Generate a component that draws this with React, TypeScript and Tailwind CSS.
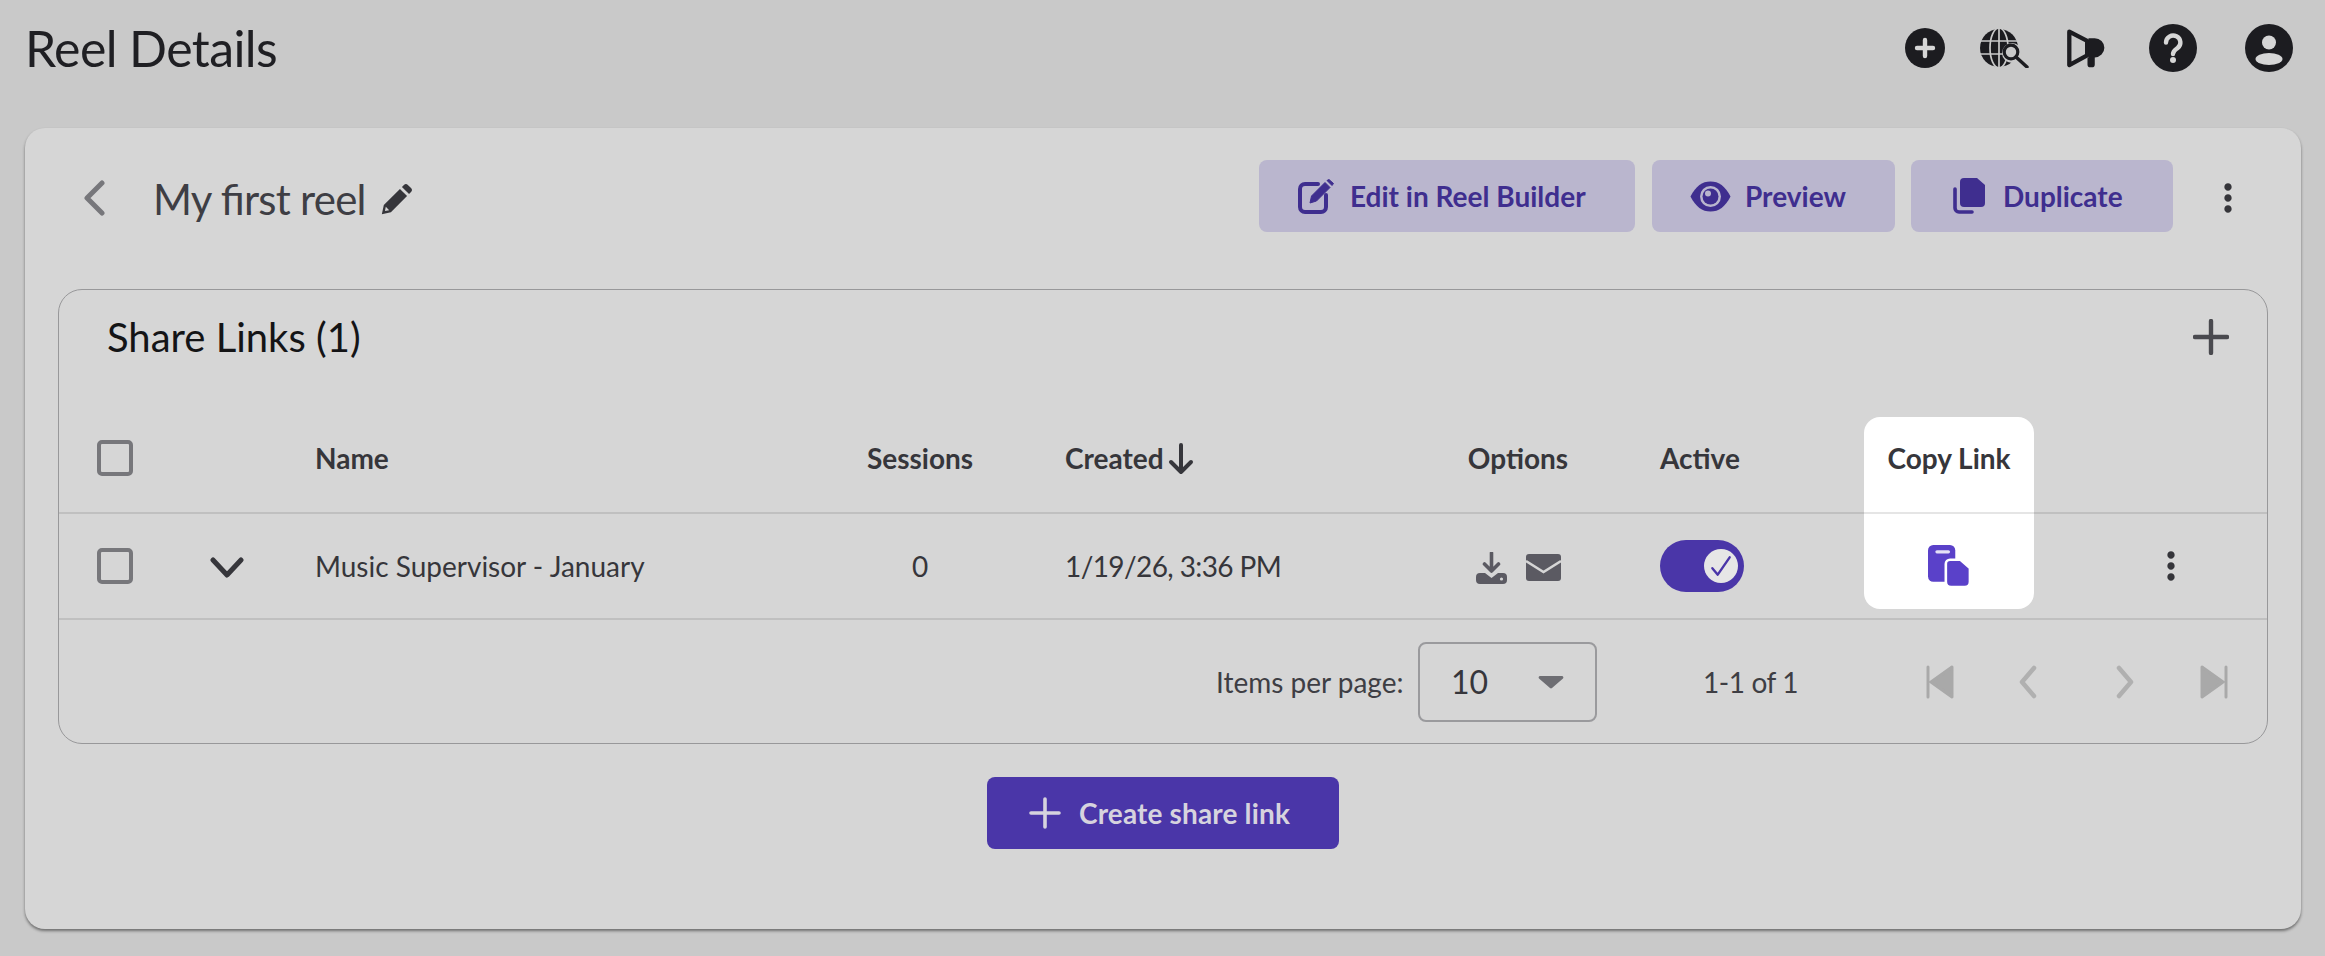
import React from "react";
import { MdMoreVert } from "react-icons/md";

const row = "grid grid-cols-[112px_112px_547px_180px_430px_156px_268px_170px_234px] items-center text-[#36363b]";

function Check() {
  return <div className="w-[36px] h-[36px] border-[4px] border-[#77777b] rounded-[5px]" />;
}

function Pager({ d }: { d: string }) {
  return (
    <svg viewBox="0 0 30 34" className="w-[30px] h-[34px]" fill="#a9a9a9" stroke="#a9a9a9" strokeWidth="3" strokeLinejoin="round" strokeLinecap="round">
      <path d={d} />
    </svg>
  );
}

export default function App() {
  return (
    <div className="w-[2325px] h-[956px] bg-[#c9c9c9] overflow-hidden font-['Lato','Noto_Sans',sans-serif] [text-rendering:optimizeLegibility] [font-feature-settings:'liga','kern']">
      <header className="h-[128px] pl-[25px] pr-[32px] pb-[32px] flex items-center justify-between">
        <h1 className="text-[50px] leading-none text-[#1f1f23] font-normal tracking-[-0.6px]">Reel Details</h1>
        <div className="flex items-center text-[#1c1c20]">
          <svg viewBox="0 0 48 48" className="w-[48px] h-[48px]">
            <circle cx="24" cy="24" r="20" fill="currentColor" />
            <path d="M24 16 V32 M16 24 H32" stroke="#d6d6d6" strokeWidth="4.4" strokeLinecap="round" />
          </svg>
          <svg viewBox="0 0 50 40" className="w-[50px] h-[40px] ml-[31px]" fill="none" stroke="currentColor">
            <circle cx="19" cy="20" r="19" fill="currentColor" stroke="none" />
            <g stroke="#c9c9c9" strokeWidth="1.7">
              <path d="M0 13 H38 M0 26 H38" />
              <ellipse cx="19" cy="20" rx="9" ry="20" />
              <path d="M19 0 V40" />
            </g>
            <circle cx="32" cy="25" r="10" fill="#c9c9c9" stroke="none" />
            <circle cx="31" cy="24" r="6.8" strokeWidth="3.2" />
            <path d="M36 29 L47 39" strokeWidth="3.4" strokeLinecap="round" />
          </svg>
          <svg viewBox="645 80 130 130" className="w-[43px] h-[43px] ml-[35px]">
            <path d="M658 94 L712 122 V166 L658 195 Z" fill="none" stroke="currentColor" strokeWidth="13" strokeLinejoin="round" />
            <path d="M716 114 H735 a29 29 0 0 1 0 58 V193 a9 9 0 0 1 -9 9 h-4 a9 9 0 0 1 -9 -9 V172 h3 Z" fill="currentColor" />
          </svg>
          <svg viewBox="0 0 48 48" className="w-[48px] h-[48px] ml-[41px]">
            <circle cx="24" cy="24" r="24" fill="currentColor" />
            <path d="M17 18.5 a7.2 7 0 1 1 11.5 5.6 c-2.6 1.9 -4.5 3 -4.5 6" fill="none" stroke="#d6d6d6" strokeWidth="4.4" strokeLinecap="round" />
            <circle cx="24" cy="36" r="3" fill="#d6d6d6" />
          </svg>
          <svg viewBox="0 0 48 48" className="w-[48px] h-[48px] ml-[48px]">
            <circle cx="24" cy="24" r="24" fill="currentColor" />
            <circle cx="24" cy="18.5" r="7" fill="#d6d6d6" />
            <ellipse cx="24" cy="35" rx="13.5" ry="6" fill="#d6d6d6" />
          </svg>
        </div>
      </header>

      <main className="ml-[25px] w-[2276px] h-[801px] bg-[#d6d6d6] rounded-[20px] shadow-[0_2px_3px_rgba(0,0,0,0.45)] pt-[32px] px-[33px]">
        <div className="h-[72px] flex items-center">
          <svg viewBox="0 0 22 36" className="w-[22px] h-[36px] ml-[25px] mr-[48px] mt-[4px]" fill="none" stroke="#77777b" strokeWidth="5" strokeLinecap="round" strokeLinejoin="round">
            <path d="M19 3 L4 18 L19 33" />
          </svg>
          <span className="text-[42px] text-[#3e3e44] leading-none mt-[5px] tracking-[-0.75px]">My first reel</span>
          <svg viewBox="0 0 24 24" className="w-[34px] h-[36px] ml-[13px] mt-[7px]" fill="#35353a">
            <path d="M2 22 L3.4 15.6 L14.8 4.2 L19.8 9.2 L8.4 20.6 Z M4.8 16.8 L4.2 19.8 L7.2 19.2 Z M16.2 2.8 L17.6 1.4 a2 2 0 0 1 2.8 0 L22.6 3.6 a2 2 0 0 1 0 2.8 L21.2 7.8 Z" fillRule="evenodd" />
          </svg>
          <div className="ml-auto flex items-center text-[#3f2e8f] font-bold text-[28px]">
            <button className="w-[376px] h-[72px] rounded-[8px] bg-[#bab6ce] flex items-center pl-[39px]">
              <svg viewBox="0 0 37 35" className="w-[37px] h-[35px] mr-[15px]" fill="none" stroke="#3f2e8f">
                <path d="M20 5 H7 a5 5 0 0 0 -5 5 V28 a5 5 0 0 0 5 5 H23 a5 5 0 0 0 5 -5 V16" strokeWidth="4" strokeLinecap="round" />
                <path d="M12 24 L13.5 17 L27 3.5 L32 8.5 L18.5 22 Z" fill="#3f2e8f" strokeWidth="1" strokeLinejoin="round" />
                <path d="M29 1.5 L31 0.5 L35.5 4.5 L34 6.5 Z" fill="#3f2e8f" strokeWidth="1" strokeLinejoin="round" />
              </svg>
              Edit in Reel Builder
            </button>
            <button className="w-[243px] h-[72px] rounded-[8px] bg-[#bab6ce] flex items-center pl-[38px] ml-[17px]">
              <svg viewBox="0 0 41 31" className="w-[41px] h-[31px] mr-[14px]">
                <path d="M0.5 15.5 C6 5 12 0.5 20.5 0.5 C29 0.5 35 5 40.5 15.5 C35 26 29 30.5 20.5 30.5 C12 30.5 6 26 0.5 15.5 Z" fill="#3f2e8f" />
                <circle cx="20.5" cy="15.5" r="10.5" fill="#bab6ce" />
                <circle cx="20.5" cy="15.5" r="8" fill="#3f2e8f" />
                <circle cx="18" cy="12.5" r="3" fill="#bab6ce" />
              </svg>
              Preview
            </button>
            <button className="w-[262px] h-[72px] rounded-[8px] bg-[#bab6ce] flex items-center pl-[42px] ml-[16px]">
              <svg viewBox="0 0 32 36" className="w-[32px] h-[36px] mr-[18px]">
                <path d="M2 11 V30 a4 4 0 0 0 4 4 H19" fill="none" stroke="#3f2e8f" strokeWidth="3.6" strokeLinecap="round" />
                <path d="M11 0 H24 L32 7 V25 a4 4 0 0 1 -4 4 H11 a4 4 0 0 1 -4 -4 V4 a4 4 0 0 1 4 -4 Z" fill="#3f2e8f" />
              </svg>
              Duplicate
            </button>
            <MdMoreVert size={44} className="ml-[33px] mr-[18px] mt-[3px] text-[#35353a]" />
          </div>
        </div>

        <section className="relative mt-[57px] h-[455px] border-[1.5px] border-[#98989a] rounded-[24px]">
          <div className="absolute left-[1805px] top-[127px] w-[170px] h-[192px] bg-white rounded-[16px]" />
          <div className="relative h-[113px] flex items-center justify-between pl-[48px] pr-[38px] pb-[20px]">
            <h2 className="text-[40px] leading-none font-normal text-[#141416]">Share Links (1)</h2>
            <svg viewBox="0 0 36 36" className="w-[36px] h-[36px]" stroke="#4a4a4f" strokeWidth="4.4" strokeLinecap="round">
              <path d="M18 2 V34 M2 18 H34" />
            </svg>
          </div>

          <div className={`${row} relative h-[111px] font-bold text-[28px] border-b-[2px] border-black/10`}>
            <div className="flex justify-center"><Check /></div>
            <div />
            <div className="pl-[32px]">Name</div>
            <div className="text-center">Sessions</div>
            <div className="pl-[55px] flex items-center">
              Created
              <svg viewBox="0 0 26 32" className="w-[26px] h-[32px] ml-[4px] mt-[2px]" fill="none" stroke="#36363b" strokeWidth="4" strokeLinecap="round" strokeLinejoin="round">
                <path d="M13 2 V29 M3 19 L13 29 L23 19" />
              </svg>
            </div>
            <div className="text-center">Options</div>
            <div className="pl-[64px]">Active</div>
            <div className="text-center">Copy Link</div>
            <div />
          </div>

          <div className={`${row} relative h-[106px] text-[28px] border-b-[2px] border-black/10`}>
            <div className="flex justify-center"><Check /></div>
            <div className="flex justify-center pt-[3px]">
              <svg viewBox="0 0 34 22" className="w-[34px] h-[22px]" fill="none" stroke="#36363b" strokeWidth="5" strokeLinecap="round" strokeLinejoin="round">
                <path d="M3 3 L17 18 L31 3" />
              </svg>
            </div>
            <div className="pl-[32px]">Music Supervisor - January</div>
            <div className="text-center">0</div>
            <div className="pl-[55px] tracking-[-0.6px]">1/19/26, 3:36 PM</div>
            <div className="flex items-center justify-center gap-[19px] pt-[3px]">
              <svg viewBox="0 0 31 32" className="w-[31px] h-[32px]">
                <path d="M15.5 1 V18 M8.5 12 L15.5 19 L22.5 12" fill="none" stroke="#5b5a62" strokeWidth="3.6" strokeLinecap="round" strokeLinejoin="round" />
                <path d="M4 21 H9 L15.5 26 L22 21 H27 a4 4 0 0 1 4 4 V28 a4 4 0 0 1 -4 4 H4 a4 4 0 0 1 -4 -4 V25 a4 4 0 0 1 4 -4 Z" fill="#5b5a62" />
                <circle cx="25.5" cy="27" r="1.6" fill="#d6d6d6" />
              </svg>
              <svg viewBox="0 0 35 27" className="w-[35px] h-[27px]">
                <rect width="35" height="27" rx="3" fill="#5b5a62" />
                <path d="M0 7 L17.5 18 L35 7" fill="none" stroke="#d6d6d6" strokeWidth="2.6" />
              </svg>
            </div>
            <div className="pl-[64px]">
              <div className="w-[84px] h-[52px] rounded-full bg-[#4a36a8] flex items-center justify-end pr-[6px]">
                <div className="w-[34px] h-[34px] rounded-full bg-[#e6e6e6] flex items-center justify-center">
                  <svg viewBox="0 0 24 24" className="w-[26px] h-[26px]" fill="none" stroke="#4a36a8" strokeWidth="2.2" strokeLinecap="round" strokeLinejoin="round">
                    <path d="M4 14 L9 20 L20 4" />
                  </svg>
                </div>
              </div>
            </div>
            <div className="flex justify-center">
              <svg viewBox="0 0 41 40" className="w-[43px] h-[42px]">
                <path d="M5 0 H21 a5 5 0 0 1 5 5 V35 H5 a5 5 0 0 1 -5 -5 V5 a5 5 0 0 1 5 -5 Z" fill="#5a41c9" />
                <rect x="7" y="5" width="14" height="3" rx="1.5" fill="#e4e0f6" />
                <path d="M21 14 H31 L40 22 V35 a5 5 0 0 1 -5 5 H22 a5 5 0 0 1 -5 -5 V18 a4 4 0 0 1 4 -4 Z" fill="#5a41c9" stroke="white" strokeWidth="2.5" />
              </svg>
            </div>
            <div className="pl-[40px] flex justify-center">
              <MdMoreVert size={44} className="text-[#35353a]" />
            </div>
          </div>

          <div className="relative h-[124px] flex items-center text-[#3e3e44] text-[28px]">
            <span className="ml-[1157px] w-[186px] whitespace-nowrap">Items per page:</span>
            <div className="ml-[16px] w-[179px] h-[80px] border-[2px] border-[#9a9a9d] rounded-[8px] flex items-center pl-[31px]">
              <span className="text-[32px] text-[#36363b]">10</span>
              <svg viewBox="0 0 26 14" className="w-[26px] h-[14px] ml-[50px]" fill="#6e6e73">
                <path d="M2 1 H24 a1.5 1.5 0 0 1 1 2.5 L14 13 a1.5 1.5 0 0 1 -2 0 L1 3.5 A1.5 1.5 0 0 1 2 1 Z" />
              </svg>
            </div>
            <span className="ml-[106px] whitespace-nowrap w-[94px] tracking-[-0.4px]">1-1 of 1</span>
            <div className="ml-[128px] flex items-center">
              <Pager d="M3 2 V32 M27 2 L6 17 L27 32 Z" />
              <svg viewBox="0 0 18 34" className="w-[18px] h-[34px] ml-[64px]" fill="none" stroke="#b0b0b0" strokeWidth="4.5" strokeLinecap="round" strokeLinejoin="round"><path d="M15 3 L3 17 L15 31" /></svg>
              <svg viewBox="0 0 18 34" className="w-[18px] h-[34px] ml-[79px]" fill="none" stroke="#b0b0b0" strokeWidth="4.5" strokeLinecap="round" strokeLinejoin="round"><path d="M3 3 L15 17 L3 31" /></svg>
              <div className="ml-[65px]"><Pager d="M27 2 V32 M3 2 L24 17 L3 32 Z" /></div>
            </div>
          </div>
        </section>

        <div className="flex justify-center mt-[33px]">
          <button className="w-[352px] h-[72px] bg-[#4a36a8] rounded-[8px] flex items-center pl-[42px] text-[#d6d3de] font-bold text-[28px] tracking-[0.15px]">
            <svg viewBox="0 0 32 32" className="w-[32px] h-[32px] mr-[18px]" stroke="#d6d3de" strokeWidth="3.6" strokeLinecap="round">
              <path d="M16 2 V30 M2 16 H30" />
            </svg>
            Create share link
          </button>
        </div>
      </main>
    </div>
  );
}
